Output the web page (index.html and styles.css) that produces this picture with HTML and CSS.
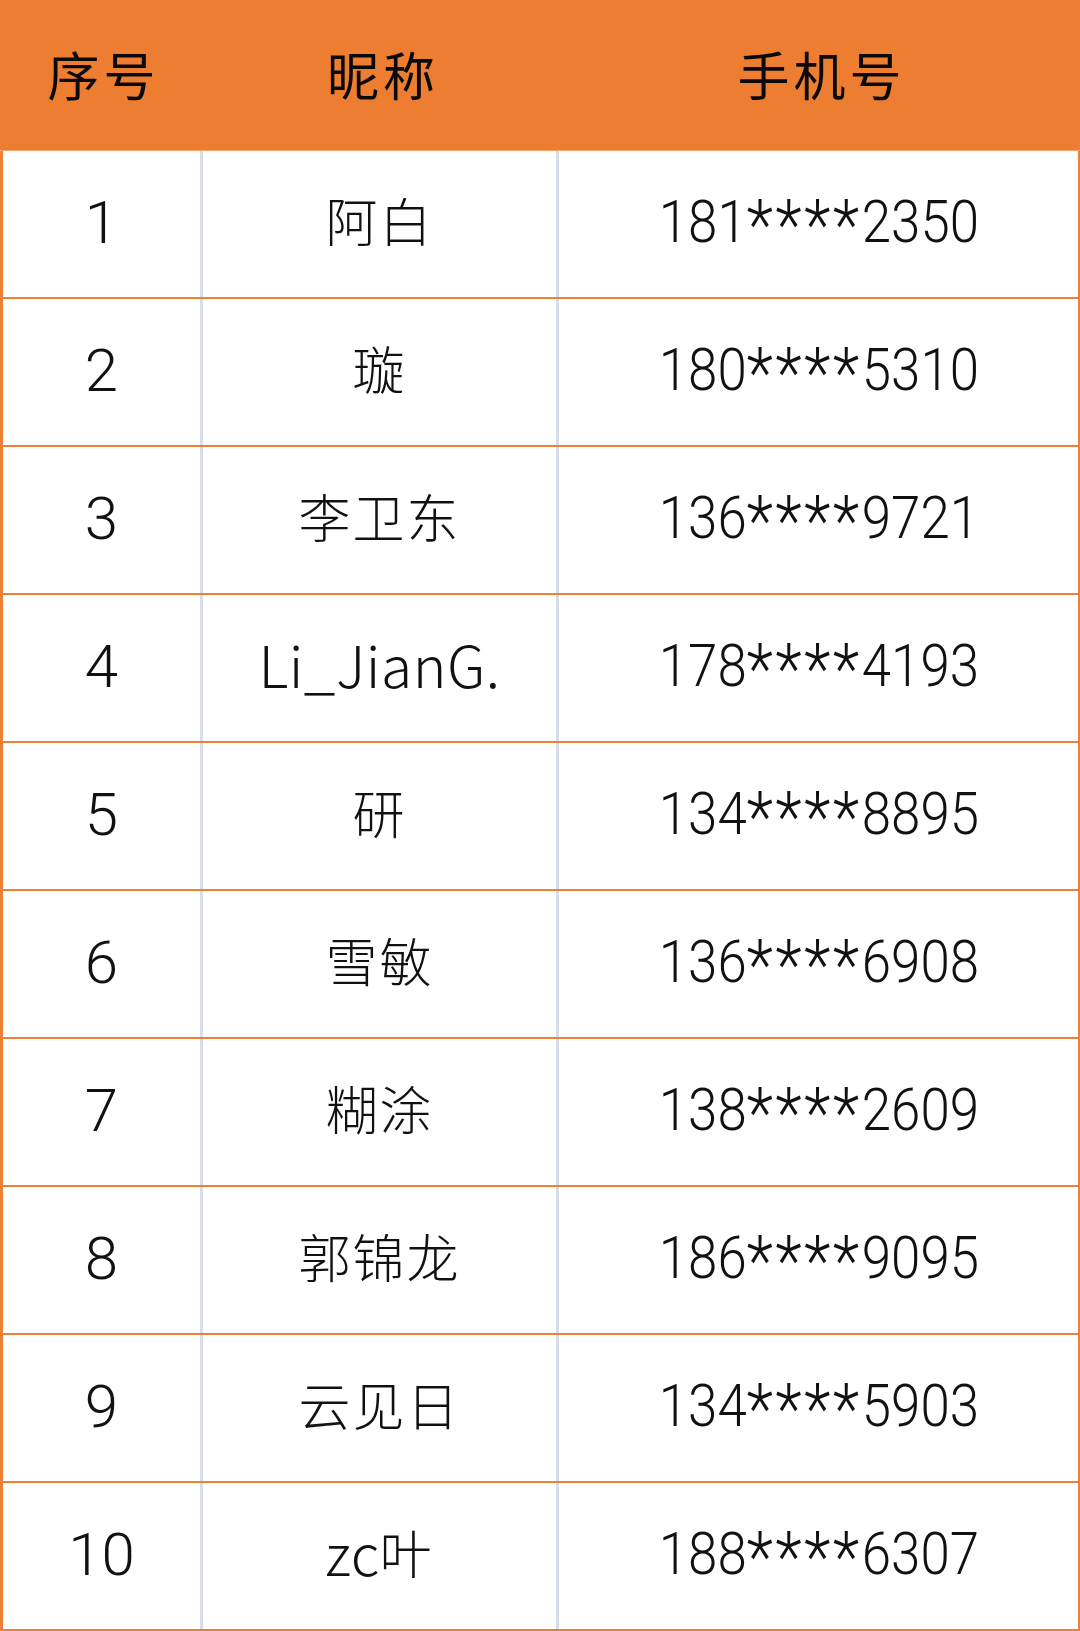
FILE: index.html
```html
<!DOCTYPE html>
<html lang="zh-CN">
<head>
<meta charset="utf-8">
<title>名单</title>
<link rel="stylesheet" href="styles.css">
</head>
<body>
<div class="sheet">
  <div class="row head">
    <div class="cell c1">序号</div>
    <div class="cell c2">昵称</div>
    <div class="cell c3">手机号</div>
  </div>
  <div class="row"><div class="cell c1 num">1</div><div class="cell c2 name">阿白</div><div class="cell c3"><span class="phone">181<span class="mask">****</span>2350</span></div></div>
  <div class="row"><div class="cell c1 num">2</div><div class="cell c2 name">璇</div><div class="cell c3"><span class="phone">180<span class="mask">****</span>5310</span></div></div>
  <div class="row"><div class="cell c1 num">3</div><div class="cell c2 name">李卫东</div><div class="cell c3"><span class="phone">136<span class="mask">****</span>9721</span></div></div>
  <div class="row"><div class="cell c1 num">4</div><div class="cell c2 name"><span class="lat">Li_JianG.</span></div><div class="cell c3"><span class="phone">178<span class="mask">****</span>4193</span></div></div>
  <div class="row"><div class="cell c1 num">5</div><div class="cell c2 name">研</div><div class="cell c3"><span class="phone">134<span class="mask">****</span>8895</span></div></div>
  <div class="row"><div class="cell c1 num">6</div><div class="cell c2 name">雪敏</div><div class="cell c3"><span class="phone">136<span class="mask">****</span>6908</span></div></div>
  <div class="row"><div class="cell c1 num">7</div><div class="cell c2 name">糊涂</div><div class="cell c3"><span class="phone">138<span class="mask">****</span>2609</span></div></div>
  <div class="row"><div class="cell c1 num">8</div><div class="cell c2 name">郭锦龙</div><div class="cell c3"><span class="phone">186<span class="mask">****</span>9095</span></div></div>
  <div class="row"><div class="cell c1 num">9</div><div class="cell c2 name">云见日</div><div class="cell c3"><span class="phone">134<span class="mask">****</span>5903</span></div></div>
  <div class="row"><div class="cell c1 num">10</div><div class="cell c2 name"><span class="lat">zc</span>叶</div><div class="cell c3"><span class="phone">188<span class="mask">****</span>6307</span></div></div>
</div>
</body>
</html>
```

FILE: styles.css
```css
html, body {
  margin: 0;
  padding: 0;
  background: #ffffff;
}

.sheet {
  width: 1080px;
  color: #111111;
}

.row {
  display: grid;
  grid-template-columns: 203px 356px 1fr;
  height: 148px;
  box-sizing: border-box;
  border-bottom: 2px solid #ee8035;
}

.cell {
  display: flex;
  align-items: center;
  justify-content: center;
  box-sizing: border-box;
  white-space: nowrap;
}

.row .c1 {
  border-left: 3px solid #ee8035;
  border-right: 3px solid #d7dee9;
}

.row .c2 {
  border-right: 3px solid #d7dee9;
}

.row .c3 {
  border-right: 2px solid #ee8035;
}

.row.head {
  height: 151px;
  background: #ed7d31;
  border-bottom: 1px solid #f4a56e;
}

.row.head .cell {
  border: none;
  font-family: "Noto Sans CJK SC", sans-serif;
  font-weight: 400;
  font-size: 52px;
  letter-spacing: 4px;
  text-indent: 4px;
  color: #0a0a0a;
  padding-bottom: 4px;
}

.num {
  font-family: Roboto, "Liberation Sans", sans-serif;
  font-weight: 300;
  font-size: 60px;
  padding-bottom: 4px;
}

.name {
  font-family: "Noto Sans CJK SC", sans-serif;
  font-weight: 300;
  font-size: 52px;
  letter-spacing: 2px;
  padding-bottom: 10px;
}

.name .lat {
  font-size: 57px;
  letter-spacing: 0.5px;
}

.c3 {
  padding-bottom: 6px;
}

.phone {
  display: inline-block;
  font-family: Roboto, "Liberation Sans", sans-serif;
  font-weight: 300;
  font-size: 60px;
  transform: scaleX(0.88);
}

.phone .mask {
  font-size: 70px;
  letter-spacing: 3px;
  vertical-align: -7px;
  line-height: 0;
}
```
